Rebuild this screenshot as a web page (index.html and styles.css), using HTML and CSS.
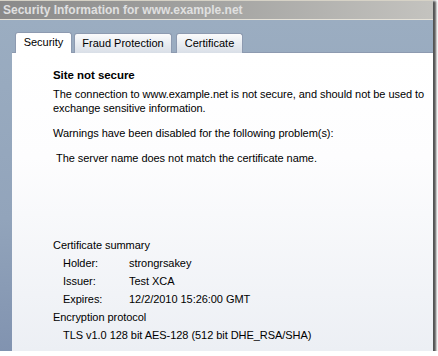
FILE: index.html
```html
<!DOCTYPE html>
<html>
<head>
<meta charset="utf-8">
<link rel="stylesheet" href="styles.css">
</head>
<body>
<div class="window">
  <div class="titlebar">Security Information for www.example.net</div>
  <div class="client">
    <div class="tabs">
      <div class="tab selected tab-security">Security</div>
      <div class="tab tab-fraud">Fraud Protection</div>
      <div class="tab tab-cert">Certificate</div>
    </div>
    <div class="panel">
      <div class="heading">Site not secure</div>
      <p class="msg">The connection to www.example.net is not secure, and should not be used to exchange sensitive information.</p>
      <p class="msg gap">Warnings have been disabled for the following problem(s):</p>
      <p class="msg gap problem">The server name does not match the certificate name.</p>
      <div class="summary">
        <div class="row">Certificate summary</div>
        <div class="row indent"><span class="label">Holder:</span><span>strongrsakey</span></div>
        <div class="row indent"><span class="label">Issuer:</span><span>Test XCA</span></div>
        <div class="row indent"><span class="label">Expires:</span><span>12/2/2010 15:26:00 GMT</span></div>
        <div class="row">Encryption protocol</div>
        <div class="row indent">TLS v1.0 128 bit AES-128 (512 bit DHE_RSA/SHA)</div>
      </div>
    </div>
  </div>
</div>
</body>
</html>
```
FILE: styles.css
```css
html, body {
  margin: 0;
  padding: 0;
  background: #ffffff;
}
body {
  font-family: "Liberation Sans", Arial, sans-serif;
  font-size: 11px;
  color: #000;
}
.window {
  width: 433px;
  height: 351px;
  display: flex;
  flex-direction: column;
  box-shadow: 2px 2px 2px 1px rgba(40, 40, 40, 0.8);
}
.titlebar {
  height: 20px;
  line-height: 19px;
  padding-left: 3px;
  font-weight: bold;
  font-size: 12px;
  color: #e0e0e0;
  background: linear-gradient(to right, #8a8a8a 0%, #a4a4a2 50%, #c4c3bf 100%);
  border-top: 1px solid #d6d2c6;
  box-sizing: border-box;
  border-bottom: 1px solid #e6e2d8;
}
.client {
  flex: 1;
  display: flex;
  flex-direction: column;
  background: linear-gradient(to bottom, #9badc1 0%, #92a4bb 60%, #8193b0 100%);
  padding-top: 12px;
}
.tabs {
  display: flex;
  align-items: flex-end;
  padding-left: 15px;
  height: 21px;
  position: relative;
  z-index: 1;
}
.tab {
  height: 20px;
  box-sizing: border-box;
  border: 1px solid #8d9ab0;
  border-bottom: none;
  border-radius: 3px 3px 0 0;
  text-align: center;
  line-height: 18px;
  background: linear-gradient(to bottom, #fbfbfc 0%, #e9edf2 50%, #d9dfe7 100%);
  margin-right: 2px;
}
.tab.selected {
  height: 21px;
  background: #ffffff;
  line-height: 19px;
}
.tab-security { width: 57px; }
.tab-fraud { width: 98px; margin-right: 4px; }
.tab-cert { width: 67px; }
.panel {
  flex: 1;
  margin-left: 12px;
  border-top: 1px solid #8d9ab0;
  margin-top: -1px;
  background: linear-gradient(to bottom, #ffffff 0%, #fdfdfe 35%, #eceff4 100%);
  padding: 15px 0 0 41px;
  letter-spacing: -0.05px;
}
.heading {
  font-weight: bold;
  font-size: 11.5px;
  line-height: 14px;
}
.msg {
  margin: 5px 0 0 0;
  line-height: 14px;
  width: 375px;
}
.msg.gap {
  margin-top: 11px;
}
.msg.problem {
  padding-left: 3px;
}
.summary {
  margin-top: 71px;
}
.row {
  line-height: 18px;
  height: 18px;
  display: flex;
}
.row.indent {
  padding-left: 10px;
}
.label {
  width: 66px;
}
```
